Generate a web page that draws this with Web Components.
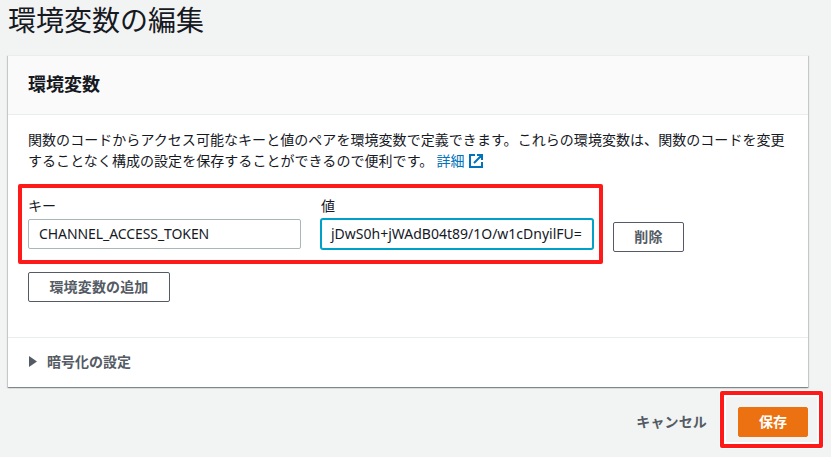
<!DOCTYPE html>
<html lang="ja">
<head>
<meta charset="utf-8">
<title>環境変数の編集</title>
<style>
html, body { margin: 0; height: 100%; overflow: hidden; background: #f2f3f3; }
body { font: 14px/21px "Noto Sans", "Noto Sans CJK JP", sans-serif; color: #16191f; }
</style>
</head>
<body>
<env-editor></env-editor>
<script>
function define(name, html) {
  customElements.define(name, class extends HTMLElement {
    constructor() {
      super();
      const t = document.createElement('template');
      t.innerHTML = html;
      this.attachShadow({ mode: 'open' }).appendChild(t.content.cloneNode(true));
    }
  });
}

define('ui-button', `
<style>
:host { display: inline-flex; box-sizing: border-box; height: 30px; padding: 0 20px 2px; align-items: center; justify-content: center;
  border: 1px solid #545b64; border-radius: 2px; background: #fff; color: #545b64; font-weight: 700; font-family: "Noto Sans CJK JP", sans-serif; letter-spacing: .15px; white-space: nowrap; }
:host([variant="primary"]) { background: #ec7211; border-color: #ec7211; color: #fff; letter-spacing: 0; }
:host([variant="link"]) { background: none; border-color: transparent; }
</style><slot></slot>`);

define('ui-field', `
<style>
:host { display: flex; flex-direction: column; width: 273px; }
.label { height: 21px; line-height: 21px; margin-bottom: 3px; font-family: "Noto Sans CJK JP", sans-serif; }
.box { box-sizing: border-box; height: 30px; padding: 0 10px 2px; display: flex; align-items: center; border: 1px solid #aab7b8; border-radius: 2px; background: #fff; white-space: nowrap; overflow: hidden; letter-spacing: -.08px; }
:host([focused]) { width: 272px; }
:host([focused]) .box { letter-spacing: 0; padding-left: 9px; border-color: #00a1c9; box-shadow: 0 0 0 1px #00a1c9; }
</style>
<div class="label"><slot name="label"></slot></div>
<div class="box"><slot></slot></div>`);

define('ui-highlight', `
<style>
:host { display: flex; position: relative; }
.mark { position: absolute; inset: var(--mark-inset); border: 4px solid #ff1a1a; border-radius: 2px; box-shadow: var(--mark-halo, none); pointer-events: none; }
</style><slot></slot><div class="mark"></div>`);

define('ui-link', `
<style>
:host { display: inline-block; color: #0073bb; white-space: nowrap; }
svg { width: 14px; height: 14px; vertical-align: -2px; margin-left: 4px; fill: none; stroke: #0073bb; stroke-width: 2; }
</style><slot></slot><svg viewBox="0 0 14 14"><path d="M6 1H1v12h12V8M8 1h5v5M13 1L5 9"/></svg>`);

define('ui-card', `
<style>
:host { display: block; box-sizing: border-box; height: 332px; border-top: 1px solid #eaeded; background: #fff;
  box-shadow: 0 1px 1px 0 rgba(0,28,36,.3), 1px 1px 1px 0 rgba(0,28,36,.15), -1px 1px 1px 0 rgba(0,28,36,.15); }
header { box-sizing: border-box; height: 59px; padding: 0 20px 2px; display: flex; align-items: center; background: #fafafa; border-bottom: 1px solid #eaeded; font-size: 18px; font-weight: 700; }
.body { box-sizing: border-box; height: 222px; padding: 14px 20px 0; }
footer { box-sizing: border-box; height: 50px; padding: 0 20px 2px; display: flex; align-items: center; border-top: 1px solid #eaeded; }
</style>
<header><slot name="title"></slot></header>
<div class="body"><slot></slot></div>
<footer><slot name="footer"></slot></footer>`);

define('ui-disclosure', `
<style>
:host { display: flex; align-items: center; gap: 10px; color: #545b64; font-weight: 700; font-family: "Noto Sans CJK JP", sans-serif; }
svg { width: 9px; height: 11px; fill: #545b64; }
</style><svg viewBox="0 0 9 11"><path d="M1 0L9 5.5L1 11Z"/></svg><slot></slot>`);

define('env-editor', `
<style>
:host { display: block; width: 800px; padding-left: 8px; font-family: "Noto Sans", "Noto Sans CJK JP", sans-serif; }
h1 { box-sizing: border-box; margin: 0; height: 55px; font: 400 28px/38px "Noto Sans CJK JP", sans-serif; }
p { margin: 0 -4px 0 0; font-family: "Noto Sans CJK JP", sans-serif; letter-spacing: .05px; }
.row { display: flex; align-items: flex-end; gap: 20px; margin-top: 24px; }
.fields { gap: 20px; --mark-inset: -11px -10px -15px -10px; }
.remove { position: relative; top: 3px; width: 71px; }
.add { margin-top: 23px; width: 142px; }
.actions { display: flex; justify-content: flex-end; align-items: center; gap: 10px; margin-top: 20px; }
.save { --mark-inset: -16px -15px -11px -18px; --mark-halo: 0 0 0 1px #fff, inset 0 0 0 2px #fff; }
</style>
<h1>環境変数の編集</h1>
<ui-card>
  <span slot="title">環境変数</span>
  <p>関数のコードからアクセス可能なキーと値のペアを環境変数で定義できます。これらの環境変数は、関数のコードを変更することなく構成の設定を保存することができるので便利です。 <ui-link>詳細</ui-link></p>
  <div class="row">
    <ui-highlight class="fields">
      <ui-field><span slot="label">キー</span><span>CHANNEL_ACCESS_TOKEN</span></ui-field>
      <ui-field focused><span slot="label">値</span><span>jDwS0h+jWAdB04t89/1O/w1cDnyilFU=</span></ui-field>
    </ui-highlight>
    <ui-button class="remove">削除</ui-button>
  </div>
  <ui-button class="add">環境変数の追加</ui-button>
  <ui-disclosure slot="footer">暗号化の設定</ui-disclosure>
</ui-card>
<div class="actions">
  <ui-button variant="link">キャンセル</ui-button>
  <ui-highlight class="save"><ui-button variant="primary">保存</ui-button></ui-highlight>
</div>`);
</script>
</body>
</html>
